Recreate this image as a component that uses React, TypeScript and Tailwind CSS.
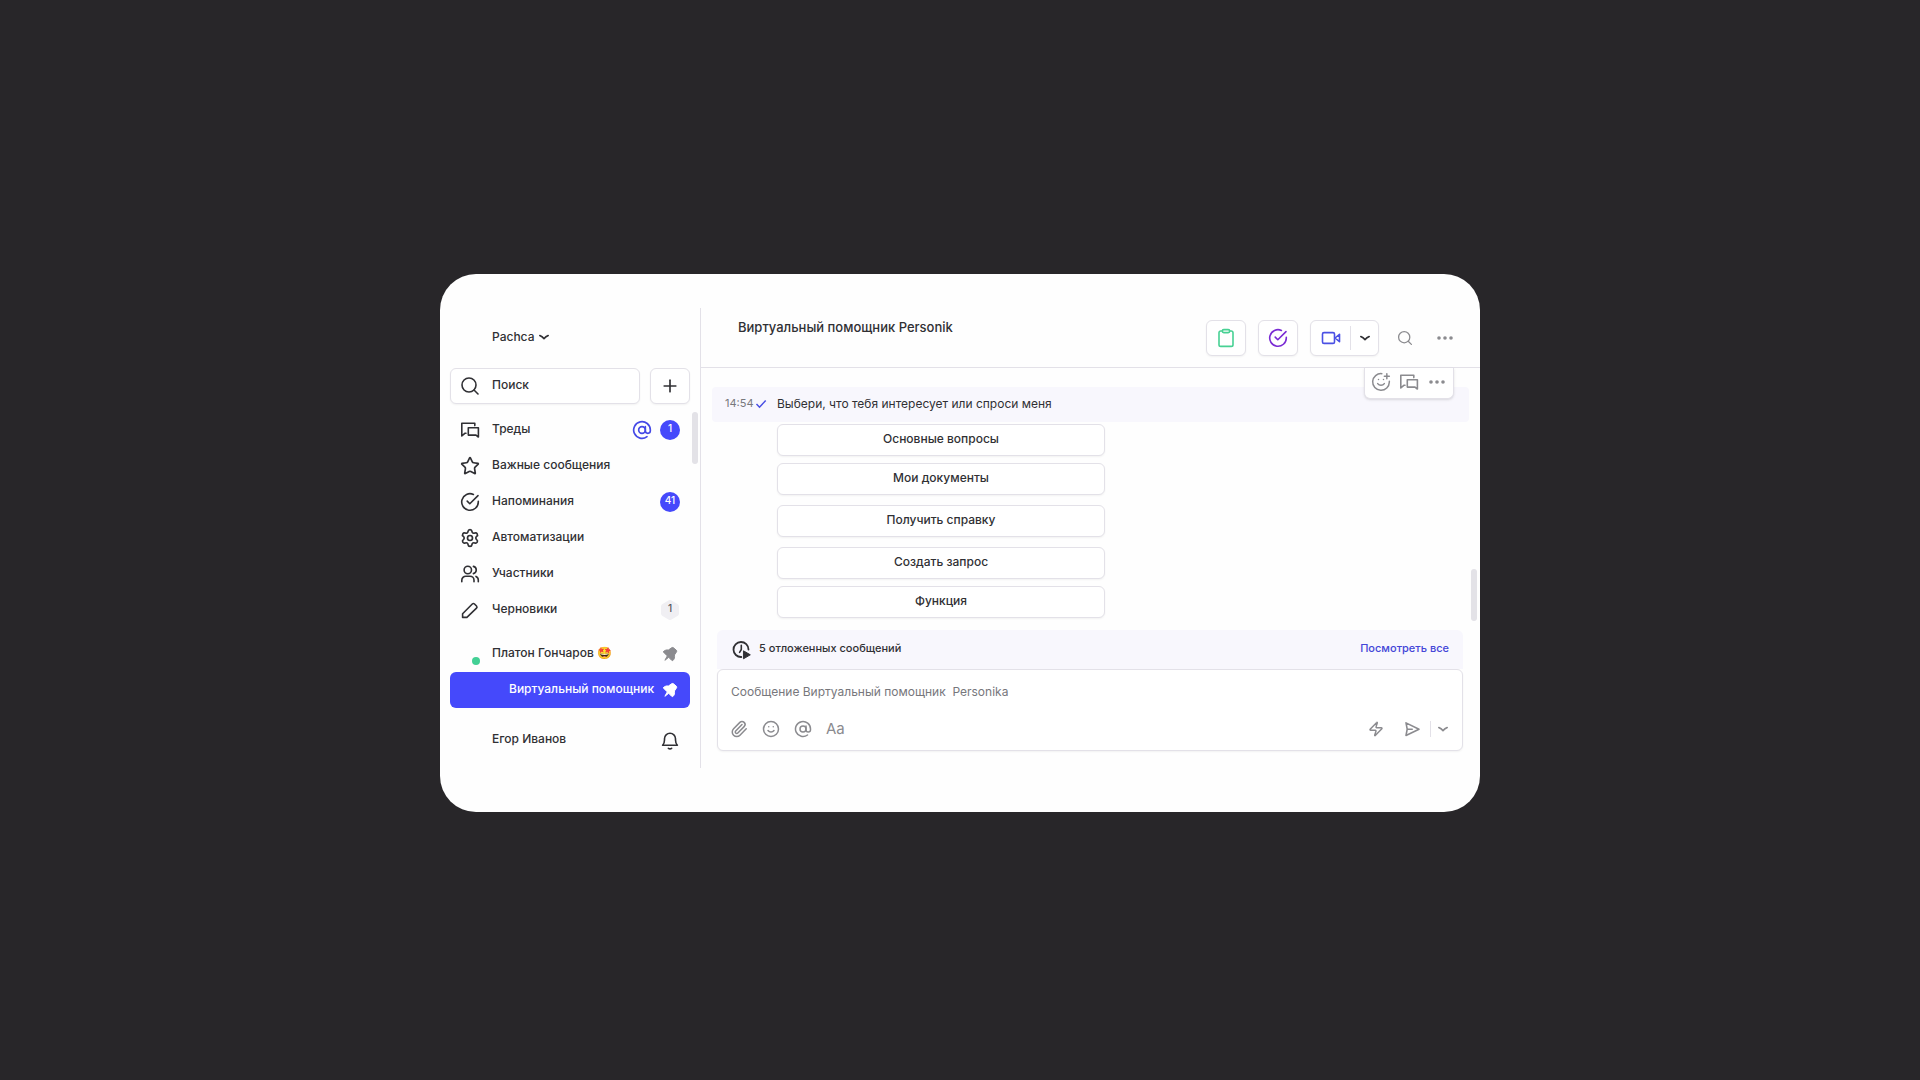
import type { ReactNode } from "react";
import {
  AtSign,
  Paperclip,
  Plus,
  Settings,
  Smile,
  SmilePlus,
  Star,
  Zap,
} from "lucide-react";

type IconProps = { className?: string };

function Icon({
  className = "size-5",
  children,
}: IconProps & { children: ReactNode }) {
  return (
    <svg
      viewBox="0 0 20 20"
      fill="none"
      stroke="currentColor"
      strokeWidth="1.6"
      strokeLinecap="round"
      strokeLinejoin="round"
      aria-hidden="true"
      className={`shrink-0 ${className}`}
    >
      {children}
    </svg>
  );
}

const SearchIcon = ({ className }: IconProps) => (
  <Icon className={className}>
    <circle cx="9" cy="9" r="7" />
    <path d="m14 14 4 4" />
  </Icon>
);

const ThreadsIcon = ({ className }: IconProps) => (
  <Icon className={className}>
    <path d="M6 13.3H4.8L1.8 16V3.2h13v2.4" />
    <path d="M8.3 7.8h10.1V17l-2.4-1.9H8.3z" />
  </Icon>
);

const CheckCircleIcon = ({ className }: IconProps) => (
  <Icon className={className}>
    <path d="M18.3 9.2v.8a8.3 8.3 0 1 1-4.9-7.6" />
    <path d="m18 3.6-8.2 8.1-2.6-2.6" />
  </Icon>
);

const UsersIcon = ({ className }: IconProps) => (
  <Icon className={className}>
    <circle cx="7.8" cy="6" r="3.7" />
    <path d="M1.8 17.8v-1.6a4 4 0 0 1 4-4h4.2a4 4 0 0 1 4 4v1.6" />
    <path d="M13.4 2.4a3.7 3.7 0 0 1 0 7.2M16 12.4a3.9 3.9 0 0 1 2.3 3.7v1.7" />
  </Icon>
);

const PencilIcon = ({ className }: IconProps) => (
  <Icon className={className}>
    <path d="M2.6 17.4v-3.6L12.3 4a1.6 1.6 0 0 1 2.2 0l2 2a1.6 1.6 0 0 1 0 2.2l-9.6 9.2z" />
  </Icon>
);

const PinIcon = ({ className }: IconProps) => (
  <Icon className={className}>
    <path
      fill="currentColor"
      strokeWidth="1"
      d="M3.8 7.3c1.200-1.200 2.900-1.600 4.600-1.300L12 3.600c.5-.3 1-.2 1.400.1l3 2.600c.5.4.5.9.2 1.400l-2.200 3.300c.4 2.100 0 4-1.300 5.300-.5.4-1 .4-1.400 0l-3-3-3.800 3 2.400-4.400-3.500-3.500c-.4-.4-.4-.8 0-1.100z"
    />
  </Icon>
);

const BellIcon = ({ className }: IconProps) => (
  <Icon className={className}>
    <path d="M2.600 15.300h14.800c-1.300-1.300-1.900-3-1.900-5.300V8.700a5.500 5.500 0 0 0-11 0V10c0 2.300-.6 4-1.900 5.300z" />
    <path d="M8.400 18.300a2.600 2.600 0 0 0 3.200 0" />
  </Icon>
);

const ClipboardIcon = ({ className }: IconProps) => (
  <Icon className={className}>
    <path d="M6.300 3H4.700A1.700 1.700 0 0 0 3 4.700v12a1.700 1.700 0 0 0 1.700 1.700h10.600a1.700 1.700 0 0 0 1.700-1.700v-12A1.700 1.700 0 0 0 15.300 3h-1.600" />
    <rect x="6.300" y="1.600" width="7.400" height="3" rx="1.500" />
  </Icon>
);

const VideoIcon = ({ className }: IconProps) => (
  <Icon className={className}>
    <rect x="1.500" y="4.600" width="12" height="10.800" rx="1.500" />
    <path d="m14 10 4.500-3.700v7.400z" />
  </Icon>
);

const ChevronIcon = ({ className }: IconProps) => (
  <Icon className={className}>
    <path d="M5.800 8.600c1.600.7 2.900 1.600 4.200 3 1.300-1.400 2.600-2.300 4.200-3" />
  </Icon>
);

const DotsIcon = ({ className }: IconProps) => (
  <Icon className={className}>
    <g fill="currentColor" stroke="none">
      <circle cx="4" cy="10" r="1.800" />
      <circle cx="10" cy="10" r="1.800" />
      <circle cx="16" cy="10" r="1.800" />
    </g>
  </Icon>
);

const SendIcon = ({ className }: IconProps) => (
  <Icon className={className}>
    <path d="m4 3.900 13 6.300L4 16.500l1.200-6.300zM5.200 10.200h5" />
  </Icon>
);

const DelayedIcon = ({ className }: IconProps) => (
  <Icon className={className}>
    <path strokeWidth="1.800" d="M9.300 17A7.500 7.500 0 1 1 16.500 9.500" />
    <path d="M9.300 5.200V9.500L7.600 12.300" />
    <path
      fill="currentColor"
      strokeWidth="1"
      d="m11.800 11 6.500 3.800-6.500 3.800z"
    />
  </Icon>
);

function Count({ value }: { value: number }) {
  return (
    <span className="flex size-5 items-center justify-center rounded-full bg-[#4549fb] pb-0.5 text-[10px] font-medium text-white">
      {value}
    </span>
  );
}

function DraftCount({ value }: { value: number }) {
  return (
    <span className="relative flex size-5 items-center justify-center pb-0.5 text-[10px] text-[#55555a]">
      <svg
        viewBox="0 0 20 20"
        className="absolute inset-0 size-5 text-[#f0eff3]"
        aria-hidden="true"
      >
        <path
          d="m10 3 6 3.500v7L10 17l-6-3.500v-7z"
          fill="currentColor"
          stroke="currentColor"
          strokeWidth="6"
          strokeLinejoin="round"
        />
      </svg>
      <span className="relative">{value}</span>
    </span>
  );
}

const menu = [
  {
    label: "Треды",
    icon: <ThreadsIcon />,
    extra: (
      <>
        <AtSign className="size-5 text-[#4549e6]" strokeWidth={2} />
        <Count value={1} />
      </>
    ),
  },
  {
    label: "Важные сообщения",
    icon: <Star className="size-5" strokeWidth={2} />,
  },
  {
    label: "Напоминания",
    icon: <CheckCircleIcon />,
    extra: <Count value={41} />,
  },
  {
    label: "Автоматизации",
    icon: <Settings className="size-5" strokeWidth={2} />,
  },
  { label: "Участники", icon: <UsersIcon /> },
  {
    label: "Черновики",
    icon: <PencilIcon />,
    extra: <DraftCount value={1} />,
  },
];

const replyGroups = [
  ["Основные вопросы", "Мои документы"],
  ["Получить справку"],
  ["Создать запрос", "Функция"],
];

const box = "rounded-md border border-[#e3e1e8] bg-white shadow-xs";

function Sidebar() {
  return (
    <aside className="relative flex w-[261px] shrink-0 flex-col border-r border-[#e3e1e8] px-2.5 text-xs font-medium">
      <button className="flex h-[60px] items-center pb-0.5 pl-[42px]">
        Pachca
        <ChevronIcon />
      </button>

      <div className="flex gap-2.5">
        <label
          className={`flex h-9 min-w-0 flex-1 items-center gap-3 px-[9px] ${box}`}
        >
          <SearchIcon />
          <input
            type="search"
            aria-label="Поиск"
            placeholder="Поиск"
            className="w-full min-w-0 bg-transparent pb-0.5 outline-none placeholder:text-[#303034]"
          />
        </label>
        <button
          aria-label="Создать"
          className={`flex h-9 w-10 items-center justify-center ${box}`}
        >
          <Plus className="size-5" strokeWidth={2} />
        </button>
      </div>

      <nav className="mt-2 flex flex-col">
        {menu.map((item) => (
          <a
            key={item.label}
            href="#"
            className="flex h-9 items-center gap-3 px-2.5"
          >
            {item.icon}
            <span className="flex-1 pb-0.5">{item.label}</span>
            {item.extra && (
              <span className="flex items-center gap-2">{item.extra}</span>
            )}
          </a>
        ))}
      </nav>

      <div className="mt-2 flex flex-col">
        <a href="#" className="flex h-9 items-center gap-3 px-2.5">
          <span className="flex size-5 items-end justify-end">
            <span className="-mb-px size-2 rounded-full bg-[#43d095]" />
          </span>
          <span className="flex-1 pb-0.5">Платон Гончаров 🤩</span>
          <PinIcon className="size-5 text-[#8b8b8f]" />
        </a>
        <a
          href="#"
          className="flex h-9 items-center justify-between rounded-md bg-[#4549fb] pr-2.5 pl-[59px] text-white"
        >
          <span className="pb-0.5 whitespace-nowrap">
            Виртуальный помощник
          </span>
          <PinIcon />
        </a>
      </div>

      <div className="mt-3.5 flex h-9 items-center justify-between pr-2.5 pl-[42px]">
        <span className="pb-0.5">Егор Иванов</span>
        <button aria-label="Уведомления">
          <BellIcon />
        </button>
      </div>

      <span className="absolute top-[104px] right-0.5 h-[52px] w-1.5 rounded-full bg-[#e3e2e7]" />
    </aside>
  );
}

function Header() {
  return (
    <header className="flex h-[60px] items-center border-b border-[#e3e1e8] pr-[25px] pl-[37px]">
      <h1 className="flex-1 pb-5 text-[13px] font-medium">
        Виртуальный помощник Personik
      </h1>
      <div className="flex items-center gap-3">
        <button
          aria-label="Задачи"
          className={`flex h-9 w-10 items-center justify-center text-[#48d194] ${box}`}
        >
          <ClipboardIcon />
        </button>
        <button
          aria-label="Напоминание"
          className={`flex h-9 w-10 items-center justify-center text-[#7a2bd4] ${box}`}
        >
          <CheckCircleIcon />
        </button>
        <div className={`flex h-9 w-[69px] items-center ${box}`}>
          <button
            aria-label="Видеозвонок"
            className="flex flex-1 justify-center text-[#4a50e4]"
          >
            <VideoIcon />
          </button>
          <span className="h-6 w-px bg-[#e3e1e8]" />
          <button
            aria-label="Варианты звонка"
            className="flex w-[27px] justify-center"
          >
            <ChevronIcon />
          </button>
        </div>
      </div>
      <div className="ml-[18px] flex items-center gap-[22px] text-[#8b8b8f]">
        <button aria-label="Поиск в чате">
          <SearchIcon className="size-4" />
        </button>
        <button aria-label="Ещё">
          <DotsIcon />
        </button>
      </div>
    </header>
  );
}

function Messages() {
  return (
    <section className="relative px-[11px] pt-[19px]">
      <div className="flex h-[35px] items-center rounded bg-[#f8f7fd] pb-0.5 pl-[13px] text-xs">
        <time className="w-[29px] text-[11px] whitespace-nowrap text-[#77777c]">
          14:54
        </time>
        <svg
          viewBox="0 0 12 10"
          className="ml-px h-2.5 w-3 text-[#4a50e4]"
          fill="none"
          stroke="currentColor"
          strokeWidth="1.500"
          aria-hidden="true"
        >
          <path d="m1.500 5 3 3.200L10.700 1.500" />
        </svg>
        <p className="ml-2.5">Выбери, что тебя интересует или спроси меня</p>
      </div>

      <div className="mt-0.5 ml-[65px] flex max-w-[328px] flex-col gap-2.5">
        {replyGroups.map((group) => (
          <div key={group[0]} className="flex flex-col gap-[7px]">
            {group.map((text) => (
              <button
                key={text}
                className={`h-8 pb-0.5 text-xs font-medium ${box}`}
              >
                {text}
              </button>
            ))}
          </div>
        ))}
      </div>

      <div className="absolute top-0 right-[26px] flex h-[31px] items-center gap-2 rounded-b-md border border-t-0 border-[#e3e1e8] bg-white px-1.5 pb-0.5 text-[#8b8b8f] shadow-sm">
        <button aria-label="Добавить реакцию">
          <SmilePlus className="size-5" strokeWidth={1.8} />
        </button>
        <button aria-label="Ответить в треде">
          <ThreadsIcon />
        </button>
        <button aria-label="Действия">
          <DotsIcon />
        </button>
      </div>
      <span className="absolute top-[201px] right-[3px] h-[52px] w-1.5 rounded-full bg-[#e3e2e7]" />
    </section>
  );
}

function Composer() {
  return (
    <section className="mt-3 mr-[17px] ml-4">
      <div className="flex h-[39px] items-center justify-between rounded-t-md bg-[#f8f7fd] pr-3.5 pl-[15px] text-[11px] font-medium">
        <span className="flex items-center gap-[7px]">
          <DelayedIcon />
          <span className="pb-0.5">5 отложенных сообщений</span>
        </span>
        <a href="#" className="pb-0.5 text-[#4446d8]">
          Посмотреть все
        </a>
      </div>
      <div className="flex h-[82px] flex-col justify-between rounded-md border border-[#e3e1e8] bg-white pt-3.5 pr-[9px] pb-[11px] pl-3 shadow-xs">
        <textarea
          rows={1}
          aria-label="Сообщение"
          placeholder={"Сообщение Виртуальный помощник \u00a0Personika"}
          className="w-full resize-none overflow-hidden pl-px text-xs outline-none placeholder:text-[#77777c]"
        />
        <div className="flex items-center justify-between text-[#8b8b8f]">
          <div className="flex items-center gap-3.5">
            <button aria-label="Прикрепить файл">
              <Paperclip className="size-[18px]" strokeWidth={2} />
            </button>
            <button aria-label="Смайлы">
              <Smile className="size-[18px]" strokeWidth={2} />
            </button>
            <button aria-label="Упомянуть">
              <AtSign className="size-[18px]" strokeWidth={2} />
            </button>
            <button className="text-[15px] leading-5">Aa</button>
          </div>
          <div className="flex items-center">
            <button aria-label="Команды">
              <Zap className="size-4" strokeWidth={2.2} />
            </button>
            <button aria-label="Отправить" className="ml-[18px]">
              <SendIcon />
            </button>
            <span className="ml-2 h-4 w-px bg-[#e3e1e8]" />
            <button aria-label="Отправить позже" className="ml-0.5">
              <ChevronIcon />
            </button>
          </div>
        </div>
      </div>
    </section>
  );
}

export default function App() {
  return (
    <div className="flex min-h-screen items-center justify-center bg-[#282629] pt-1.5 font-['Inter','Noto_Sans',sans-serif] text-[#303034]">
      <div className="flex w-full max-w-[1040px] rounded-[36px] bg-[#fefefe] pt-[34px] pb-11">
        <Sidebar />
        <main className="min-w-0 flex-1 pb-[17px]">
          <Header />
          <Messages />
          <Composer />
        </main>
      </div>
    </div>
  );
}
